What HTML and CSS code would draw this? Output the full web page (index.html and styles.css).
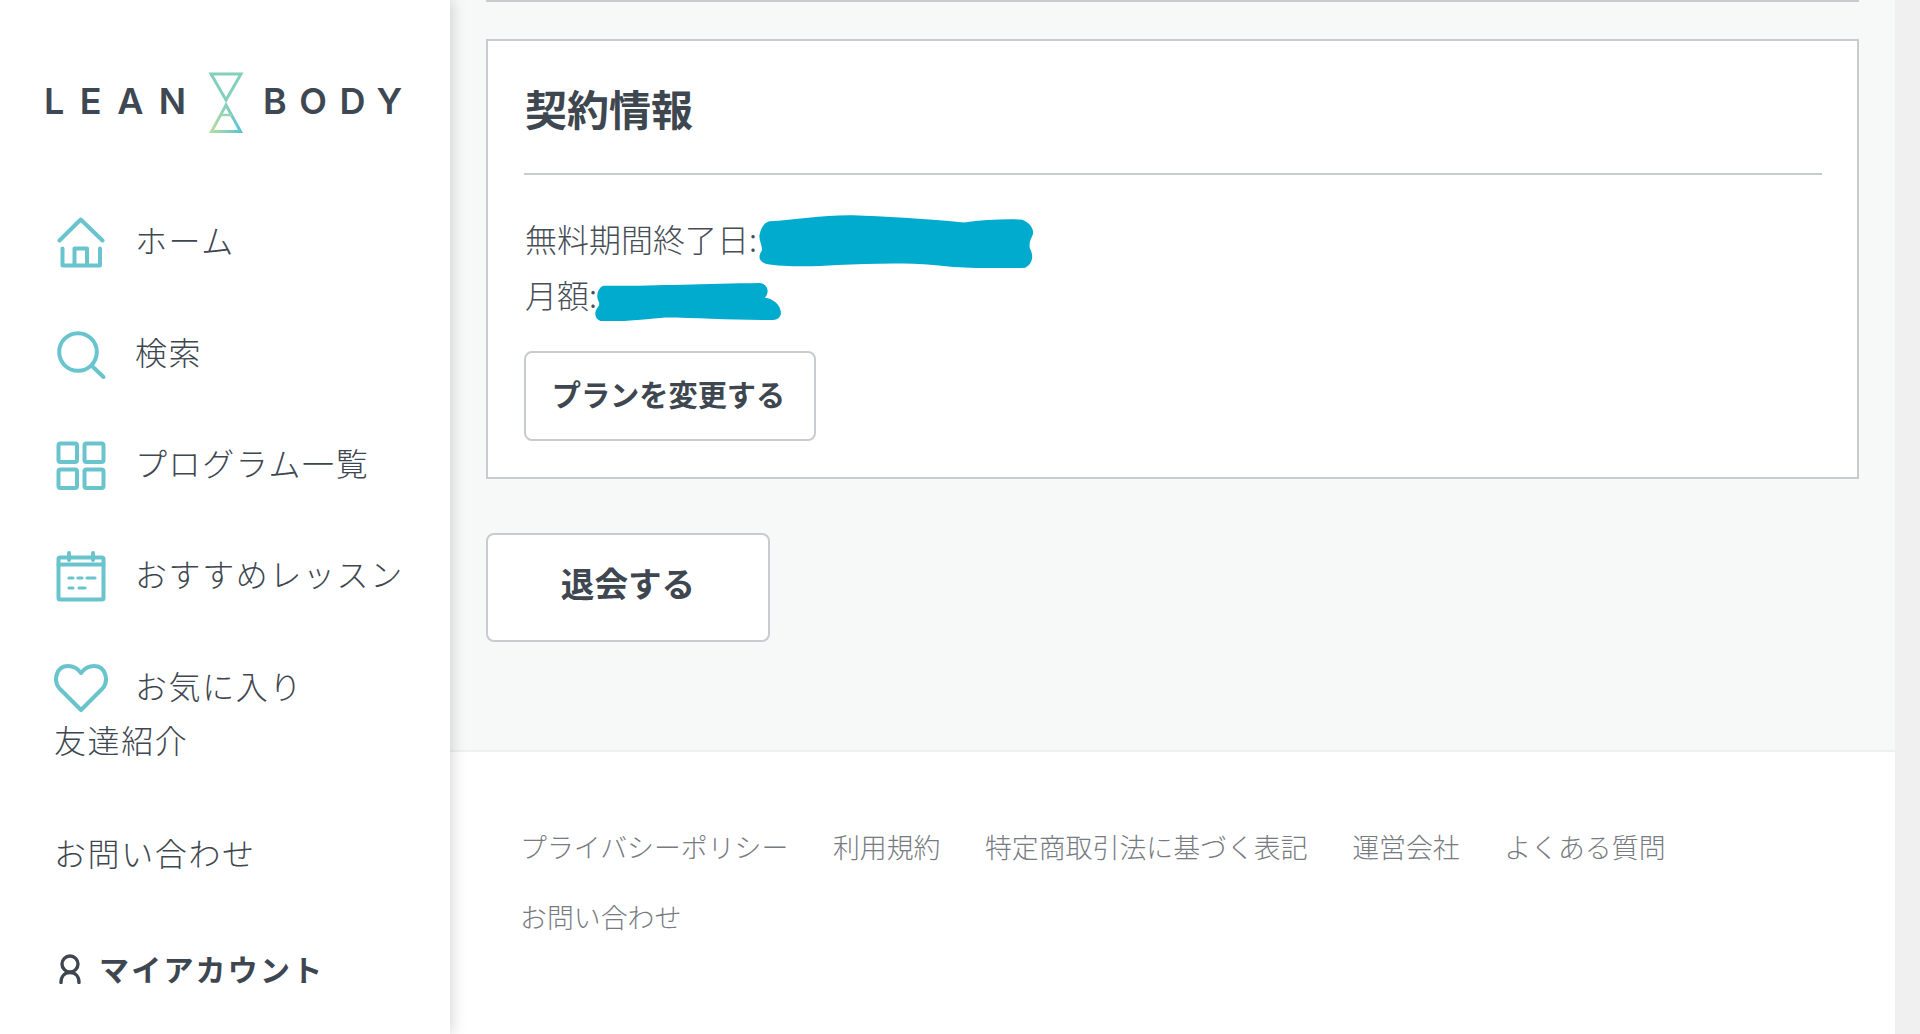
FILE: index.html
```html
<!DOCTYPE html>
<html lang="ja">
<head>
<meta charset="utf-8">
<title>LEAN BODY 契約情報</title>
<link rel="stylesheet" href="styles.css">
</head>
<body>
<div class="app">
  <aside class="sidebar">
    <div class="logo">
      <span class="logo-word logo-lean">LEAN</span>
      <svg class="logo-mark" viewBox="0 0 36 62" width="36" height="62">
        <defs>
          <linearGradient id="hg" x1="0" y1="0" x2="1" y2="0">
            <stop offset="0" stop-color="#b6dd9f"/>
            <stop offset="1" stop-color="#5cc3d6"/>
          </linearGradient>
        </defs>
        <path d="M3 2H33L18 28Z" fill="none" stroke="#84d0bc" stroke-width="3"/>
        <path d="M18 33L32.5 59.5H3.5Z" fill="none" stroke="url(#hg)" stroke-width="3"/>
        <path d="M12 43H24" stroke="#9ad6b6" stroke-width="2.5"/>
      </svg>
      <span class="logo-word logo-body">BODY</span>
    </div>
    <nav class="nav">
      <a class="nav-item">
        <svg class="nav-icon" viewBox="0 0 56 56"><path d="M7.5 26.5L28.7 5.5L50.5 26.5M10.5 34.5V51.5H48V34.5M22.5 51.5V34.5H35V51.5"/></svg>
        <span>ホーム</span>
      </a>
      <a class="nav-item">
        <svg class="nav-icon" viewBox="0 0 56 56"><circle cx="26" cy="26" r="18.8"/><path d="M40 40L51.5 51"/></svg>
        <span>検索</span>
      </a>
      <a class="nav-item">
        <svg class="nav-icon" viewBox="0 0 56 56"><rect x="6.5" y="6.5" width="18.5" height="18.5" rx="2"/><rect x="32.5" y="6.5" width="19" height="18.5" rx="2"/><rect x="6.5" y="32.5" width="18.5" height="18.5" rx="2"/><rect x="32.5" y="32.5" width="19" height="18.5" rx="2"/></svg>
        <span>プログラム一覧</span>
      </a>
      <a class="nav-item">
        <svg class="nav-icon" viewBox="0 0 56 56"><rect x="6.5" y="9.5" width="45" height="42" rx="1.5"/><path d="M6.5 16.5H51.5M17 5V12M41 5V12"/><path class="dash" d="M17 30H21M26 30H30M35 30H43M17 40H21M27 40H33"/></svg>
        <span>おすすめレッスン</span>
      </a>
      <a class="nav-item nav-item-tight">
        <svg class="nav-icon" viewBox="0 0 56 56"><path d="M29 50L7.5 28.5C1 21 4 6 16 6C22 6 26.5 9.5 29 13C31.5 9.5 36 6 42 6C54 6 57 21 50.5 28.5Z"/></svg>
        <span>お気に入り</span>
      </a>
      <a class="nav-item nav-item-plain nav-item-friend">友達紹介</a>
      <a class="nav-item nav-item-plain">お問い合わせ</a>
      <a class="nav-item nav-account">
        <svg class="account-icon" viewBox="0 0 26 32"><circle cx="13" cy="12" r="8"/><path d="M4 30.5C4 24 8 20.5 13 20.5C18 20.5 22 24 22 30.5"/></svg>
        <span>マイアカウント</span>
      </a>
    </nav>
  </aside>
  <div class="main">
    <section class="content">
      <div class="card-prev"></div>
      <div class="card">
        <h2 class="card-title">契約情報</h2>
        <div class="info">
          <p class="info-row">無料期間終了日:<svg class="blob blob-date" viewBox="755 645 715 158" width="274" height="53" preserveAspectRatio="none"><path d="M782 664C850 660 930 644 1000 646C1080 650 1180 655 1290 667C1340 660 1400 656 1442 659C1462 668 1472 685 1470 702C1466 716 1458 726 1462 745C1472 765 1470 790 1450 802C1380 806 1280 804 1210 794C1130 786 1040 790 960 794C890 800 820 800 772 790C755 784 752 768 762 752C766 740 752 715 757 702C760 685 768 668 782 664Z"/></svg></p>
          <p class="info-row">月額:<svg class="blob blob-price" viewBox="328 850 482 110" width="186" height="38" preserveAspectRatio="none"><path d="M350 858C450 860 600 852 755 850C775 852 782 875 768 893C790 895 810 915 810 938C808 952 798 958 780 957C680 958 590 950 510 950C450 956 400 962 350 962C332 960 326 945 330 930C334 920 342 915 338 905C328 885 338 862 350 858Z"/></svg></p>
        </div>
        <a class="btn btn-plan">プランを変更する</a>
      </div>
      <a class="btn btn-leave">退会する</a>
    </section>
    <footer class="footer">
      <a class="footer-link">プライバシーポリシー</a>
      <a class="footer-link">利用規約</a>
      <a class="footer-link">特定商取引法に基づく表記</a>
      <a class="footer-link">運営会社</a>
      <a class="footer-link">よくある質問</a>
      <a class="footer-link">お問い合わせ</a>
    </footer>
  </div>
  <div class="scrollbar"></div>
</div>
</body>
</html>
```
FILE: styles.css
```css
* { box-sizing: border-box; }
html, body { margin: 0; height: 100%; overflow: hidden; }
body {
  font-family: "Noto Sans CJK JP", "Noto Sans", sans-serif;
  font-weight: 300;
  color: #3e4750;
  background: #fff;
}
.app { display: flex; width: 1920px; height: 1034px; }

/* sidebar */
.sidebar {
  flex: 0 0 450px;
  height: 1034px;
  background: #fff;
  box-shadow: 2px 0 14px rgba(0, 0, 0, .17);
  position: relative;
  z-index: 2;
  padding-top: 72px;
}
.logo { display: flex; align-items: center; padding-left: 44px; height: 62px; }
.logo-word {
  font-family: Inter, "Noto Sans", sans-serif;
  font-weight: 600;
  font-size: 36px;
  line-height: 1;
  color: #3d4852;
  margin-bottom: 4px;
}
.logo-lean { width: 164px; letter-spacing: 15.5px; }
.logo-mark { flex: none; }
.logo-body { margin-left: 19px; letter-spacing: 12.5px; }

.nav { display: flex; flex-direction: column; padding-top: 77.3px; }
.nav-item {
  display: flex;
  align-items: center;
  height: 55.7px;
  margin-bottom: 55.7px;
  padding-left: 52px;
  font-size: 32px;
  letter-spacing: 1.6px;
  line-height: 56px;
  white-space: nowrap;
}
.nav-item-tight { margin-bottom: 0; }
.nav-item-plain { padding-left: 54px; }
.nav-item-friend { margin-top: -1.8px; margin-bottom: 57.5px; }
.nav-icon {
  flex: none;
  width: 56px;
  height: 56px;
  margin-top: 6.4px;
  margin-right: 27px;
  fill: none;
  stroke: #6ac4cd;
  stroke-width: 4;
  stroke-linecap: round;
  stroke-linejoin: round;
}
.nav-icon .dash { stroke-width: 3.2; }
.nav-account {
  padding-left: 57px;
  margin-top: 5px;
  font-weight: 700;
  font-size: 30px;
  letter-spacing: 2.2px;
}
.account-icon {
  flex: none;
  width: 26px;
  height: 32px;
  margin-right: 16px;
  fill: none;
  stroke: #3e4750;
  stroke-width: 3.4;
  stroke-linecap: round;
}

/* main column */
.main { flex: 1 1 auto; display: flex; flex-direction: column; min-width: 0; }
.content { background: #f7f9f8; padding: 0 36px 108px; height: 750px; }
.card-prev { height: 2px; background: #c8cbd0; }
.card {
  margin-top: 37px;
  height: 440px;
  background: #fff;
  border: 2px solid #c8cbd0;
  padding: 0 35px 0 36px;
}
.card-title {
  margin: 0;
  height: 134px;
  border-bottom: 2px solid #c8cbd0;
  padding: 38px 0 0 1px;
  font-size: 42px;
  font-weight: 700;
  line-height: 58px;
  color: #3e4750;
}
.info { padding-top: 34.5px; margin-bottom: 29.5px; }
.info-row {
  position: relative;
  margin: 0;
  height: 56px;
  padding-left: 1px;
  font-size: 32px;
  line-height: 56px;
  color: #474e56;
}
.blob { position: absolute; fill: #00abce; stroke: none; }
.blob-date { left: 235px; top: 5px; }
.blob-price { left: 71px; top: 17px; }

.btn {
  display: flex;
  align-items: center;
  justify-content: center;
  background: #fff;
  border: 2px solid #c8cbd0;
  border-radius: 8px;
  font-weight: 700;
  color: #3e4750;
  white-space: nowrap;
}
.btn-plan { width: 292px; height: 90px; font-size: 29.2px; padding: 0 3px 7px 0; }
.btn-leave { width: 284px; height: 109px; margin-top: 54px; font-size: 33.6px; padding-bottom: 10px; }

/* footer */
.footer {
  flex: 1;
  background: #fff;
  border-top: 2px solid #eff1f0;
  padding: 75px 200px 0 70px;
  display: flex;
  flex-wrap: wrap;
  column-gap: 44.5px;
  row-gap: 30px;
  align-content: flex-start;
}
.footer-link { font-size: 26.9px; line-height: 40px; color: #777b81; white-space: nowrap; }

.scrollbar { flex: 0 0 25px; background: #f0f0f0; }
```
